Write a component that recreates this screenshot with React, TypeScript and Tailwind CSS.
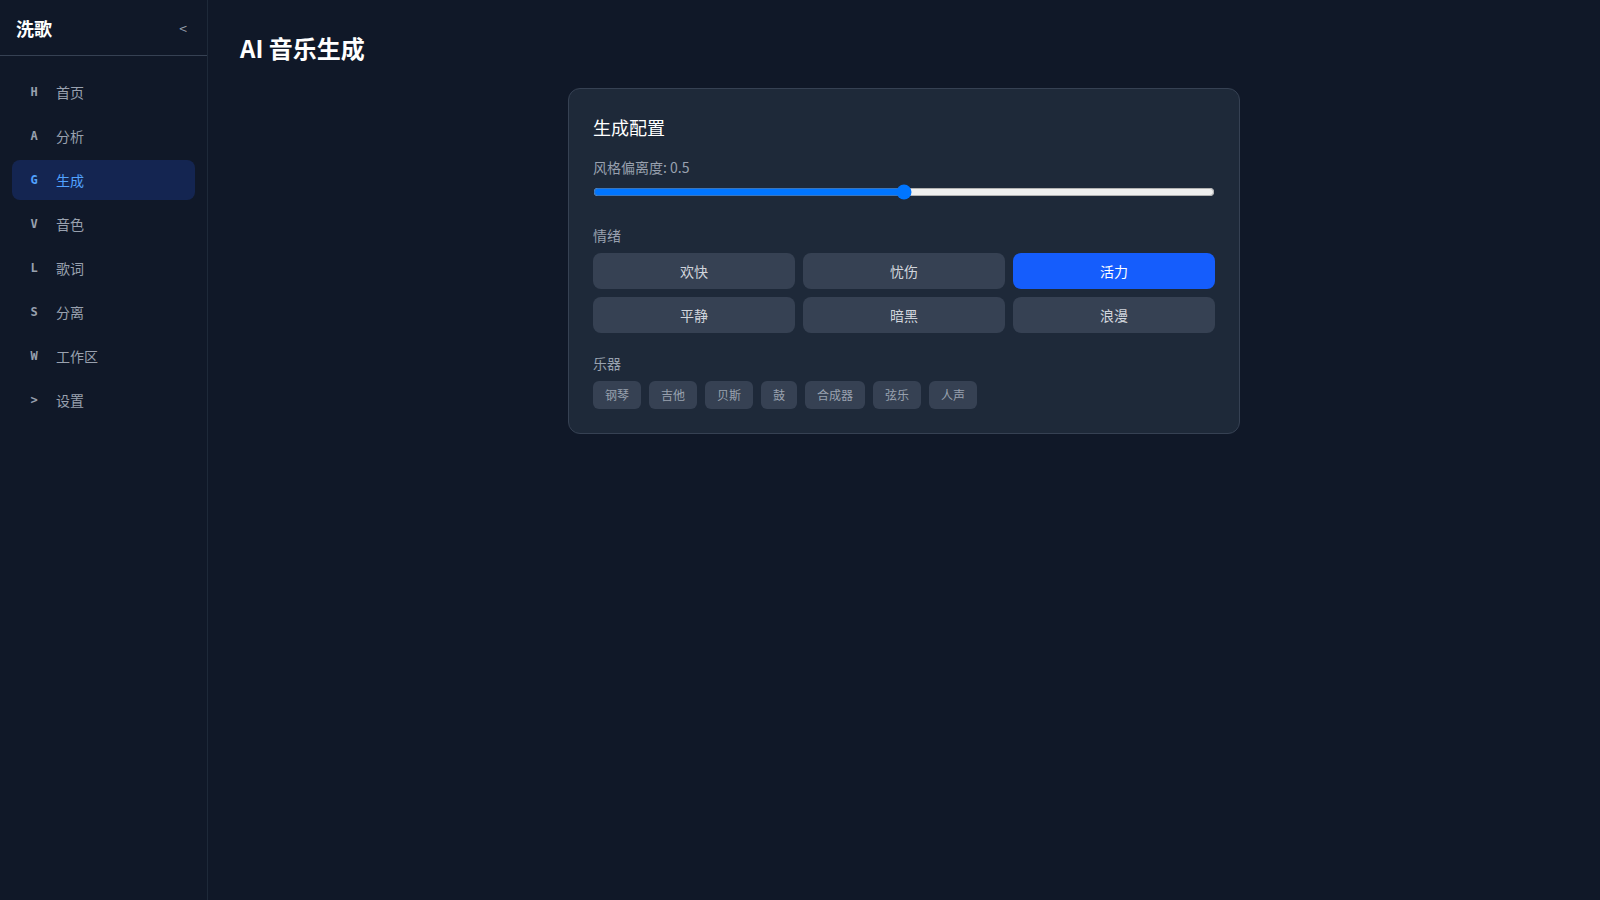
import { useState } from "react";

const navItems = [
  { key: "H", label: "首页" },
  { key: "A", label: "分析" },
  { key: "G", label: "生成" },
  { key: "V", label: "音色" },
  { key: "L", label: "歌词" },
  { key: "S", label: "分离" },
  { key: "W", label: "工作区" },
  { key: ">", label: "设置" },
];

const moods = ["欢快", "忧伤", "活力", "平静", "暗黑", "浪漫"];
const instruments = ["钢琴", "吉他", "贝斯", "鼓", "合成器", "弦乐", "人声"];

export default function App() {
  const [active] = useState("生成");
  const [mood, setMood] = useState("活力");
  const [deviation, setDeviation] = useState(0.5);

  return (
    <div className="flex h-screen w-full bg-[#101828] font-['Noto_Sans_CJK_SC',sans-serif] text-gray-100">
      {/* Sidebar */}
      <aside className="flex w-52 shrink-0 flex-col border-r border-gray-800">
        <div className="flex h-14 items-center justify-between border-b border-gray-700 px-4">
          <span className="text-lg font-bold text-white">洗歌</span>
          <button className="pr-1 text-sm text-gray-400">&lt;</button>
        </div>
        <nav className="flex flex-col gap-1 px-3 py-4">
          {navItems.map((item) => {
            const on = item.label === active;
            return (
              <div
                key={item.label}
                className={`flex h-10 items-center gap-3 rounded-lg px-3 text-sm ${
                  on ? "bg-blue-900/40 text-blue-400" : "text-gray-400"
                }`}
              >
                <span className="w-5 text-center font-['DejaVu_Sans_Mono',monospace] text-xs font-bold">
                  {item.key}
                </span>
                <span>{item.label}</span>
              </div>
            );
          })}
        </nav>
      </aside>

      {/* Main */}
      <main className="flex-1 overflow-auto p-8">
        <h1 className="mb-6 text-2xl font-bold text-white">AI 音乐生成</h1>

        <div className="mx-auto max-w-2xl rounded-xl border border-gray-700 bg-gray-800 p-6">
          <h2 className="mb-4 text-lg font-normal text-white">生成配置</h2>

          <div className="mb-5">
            <label className="mb-1 block text-sm text-gray-400">风格偏离度: {deviation}</label>
            <input
              type="range"
              min={0}
              max={1}
              step={0.1}
              value={deviation}
              onChange={(e) => setDeviation(Number(e.target.value))}
              className="w-full"
            />
          </div>

          <div className="mb-5">
            <div className="mb-2 text-sm text-gray-400">情绪</div>
            <div className="grid grid-cols-3 gap-2">
              {moods.map((m) => (
                <button
                  key={m}
                  onClick={() => setMood(m)}
                  className={`rounded-lg py-2 text-sm ${
                    mood === m ? "bg-blue-600 text-white" : "bg-gray-700 text-gray-300"
                  }`}
                >
                  {m}
                </button>
              ))}
            </div>
          </div>

          <div>
            <div className="mb-2 text-sm text-gray-400">乐器</div>
            <div className="flex flex-wrap gap-2">
              {instruments.map((i) => (
                <span key={i} className="rounded-md bg-gray-700 px-3 py-1.5 text-xs text-gray-400">
                  {i}
                </span>
              ))}
            </div>
          </div>
        </div>
      </main>
    </div>
  );
}
